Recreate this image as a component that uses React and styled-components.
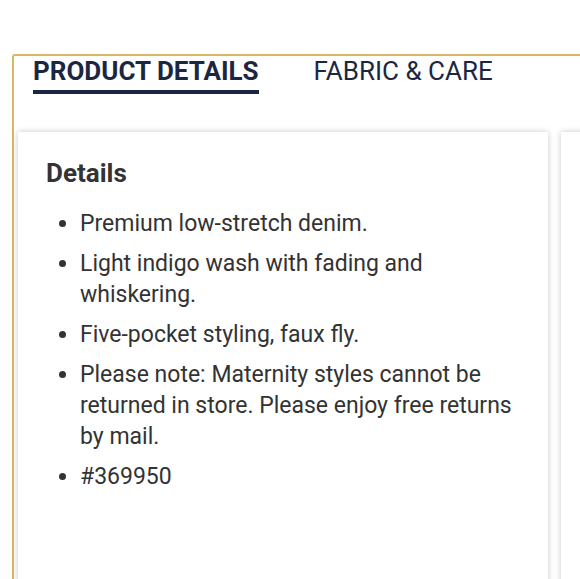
import React from "react";
import styled, { createGlobalStyle } from "styled-components";

const GlobalStyle = createGlobalStyle`
  html, body {
    margin: 0;
    padding: 0;
    background: #ffffff;
    overflow: hidden;
    font-family: Roboto, "Liberation Sans", Arial, sans-serif;
  }
`;

const Page = styled.div`
  width: 580px;
  height: 579px;
  padding: 54px 0 0 12px;
  box-sizing: border-box;
  overflow: hidden;
`;

const Panel = styled.div`
  width: 620px;
  height: 600px;
  border-top: 2px solid #d9b864;
  border-left: 2px solid #d9b864;
  border-top-left-radius: 3px;
  box-sizing: border-box;
`;

const TabBar = styled.div`
  display: flex;
  gap: 55px;
  padding-left: 19px;
`;

const Tab = styled.div`
  font-size: 26px;
  line-height: 28px;
  color: #1b2742;
  font-weight: ${(p) => (p.$active ? 700 : 400)};
  text-transform: uppercase;
  padding-top: 1px;
  padding-bottom: 5px;
  border-bottom: 4px solid ${(p) => (p.$active ? "#1b2742" : "transparent")};
`;

const Cards = styled.div`
  display: flex;
  gap: 13px;
  margin-top: 38px;
  padding-left: 4px;
`;

const Card = styled.div`
  flex: 0 0 530px;
  height: 480px;
  background: #fff;
  box-shadow: 0 0 6px rgba(0, 0, 0, 0.22);
  padding: 26px 28px;
  box-sizing: border-box;
  color: #333333;
`;

const Title = styled.h3`
  margin: 0 0 20px;
  font-size: 26px;
  line-height: 30px;
  font-weight: 700;
`;

const List = styled.ul`
  margin: 0;
  padding-left: 34px;
  list-style: disc;
`;

const Item = styled.li`
  font-size: 23px;
  line-height: 31px;
  margin-bottom: 9px;
`;

const details = [
  "Premium low-stretch denim.",
  "Light indigo wash with fading and whiskering.",
  "Five-pocket styling, faux fly.",
  "Please note: Maternity styles cannot be returned in store. Please enjoy free returns by mail.",
  "#369950",
];

export default function App() {
  return (
    <>
      <GlobalStyle />
      <Page>
        <Panel>
          <TabBar>
            <Tab $active>Product Details</Tab>
            <Tab>Fabric &amp; Care</Tab>
          </TabBar>
          <Cards>
            <Card>
              <Title>Details</Title>
              <List>
                {details.map((d) => (
                  <Item key={d}>{d}</Item>
                ))}
              </List>
            </Card>
            <Card />
          </Cards>
        </Panel>
      </Page>
    </>
  );
}
